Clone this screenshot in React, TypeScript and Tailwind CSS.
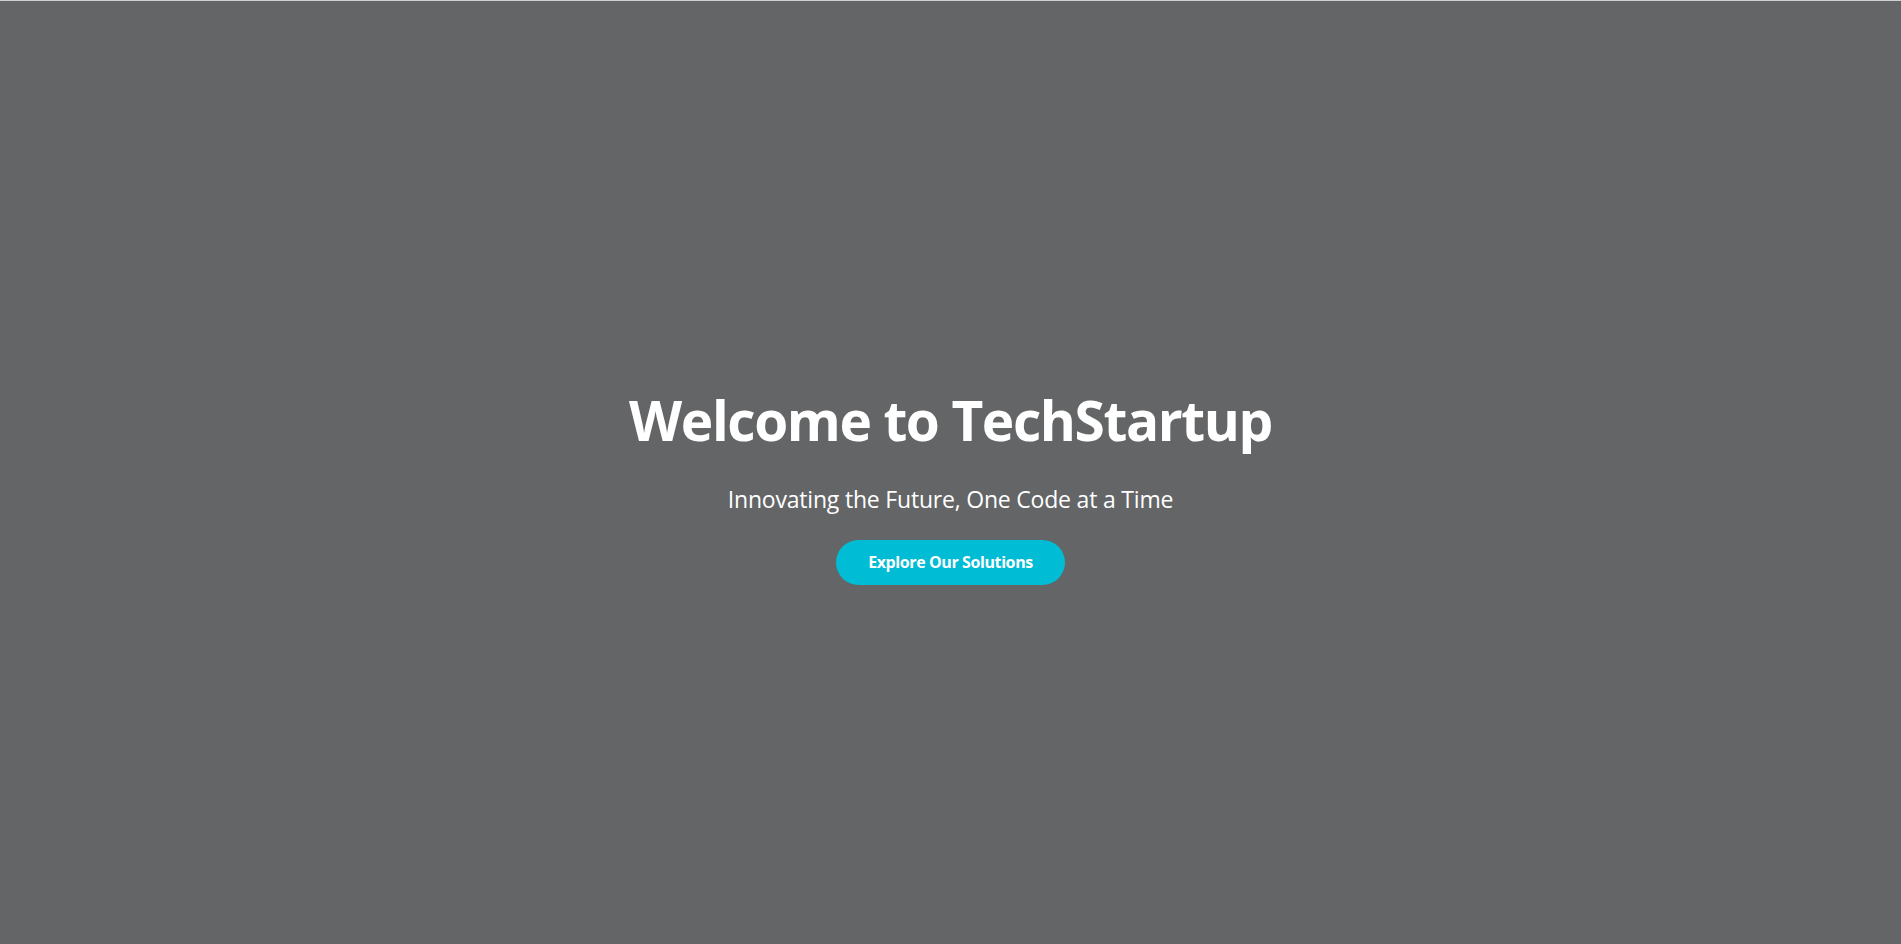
export default function App() {
  return (
    <div
      className="h-screen w-full bg-[#646567] border-t border-[#cdd1d5] pt-[22px] flex flex-col items-center justify-center text-white"
      style={{ fontFamily: '"Open Sans", "Noto Sans", sans-serif' }}
    >
      <h1 className="text-[55px] font-bold leading-[76px] tracking-[-1.4px]">Welcome to TechStartup</h1>
      <p className="mt-[25px] text-[23px] leading-[32px] tracking-[-0.2px]">Innovating the Future, One Code at a Time</p>
      <button className="mt-[25px] rounded-full bg-[#00bcd4] px-8 py-3 text-[16px] font-bold leading-[21px] tracking-[-0.4px] text-white">
        Explore Our Solutions
      </button>
    </div>
  );
}
